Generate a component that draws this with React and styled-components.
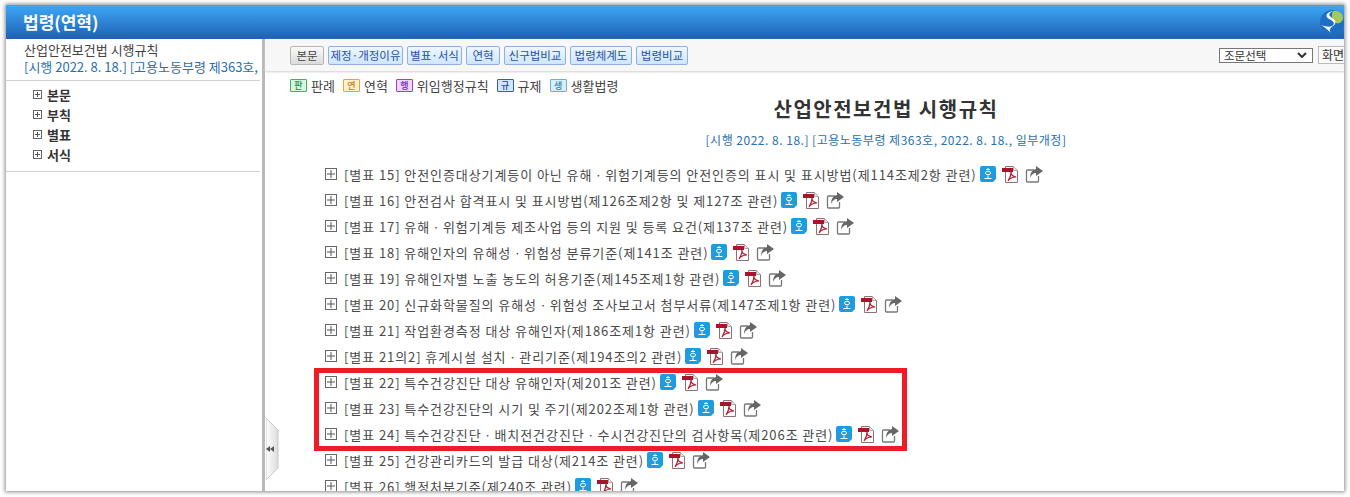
import React from 'react';
import styled, { createGlobalStyle } from 'styled-components';

const GlobalStyle = createGlobalStyle`
  html, body { margin: 0; padding: 0; background: #fff; overflow: hidden; }
  body { font-family: "Noto Sans CJK KR", "Noto Sans", sans-serif; }
`;

const Page = styled.div`
  height: 497px;
  padding: 5px 6px 6px 6px;
  box-sizing: border-box;
`;

const Window = styled.div`
  position: relative;
  height: 486px;
  display: flex;
  flex-direction: column;
  overflow: hidden;
  background: #fff;
  box-shadow: 0 0 4px 1px #8a8a8a;
`;

const Header = styled.div`
  flex: 0 0 34px;
  display: flex;
  align-items: center;
  justify-content: space-between;
  padding-left: 17px;
  background: linear-gradient(#3ea8f8, #1e60b2);
`;

const HeaderTitle = styled.h1`
  margin: 0;
  font-size: 17px;
  font-weight: 700;
  line-height: 20px;
  color: #fff;
`;

const Body = styled.div`
  flex: 1;
  min-height: 0;
  display: flex;
`;

const Sidebar = styled.aside`
  flex: 0 0 259px;
  box-sizing: border-box;
  border-right: 3px solid #b9b9b9;
  padding-right: 2px;
`;

const SideHead = styled.div`
  height: 42px;
  padding: 2px 0 0 18px;
  box-sizing: border-box;
  border-bottom: 1px solid #d2d2d2;
  font-size: 13px;
  line-height: 17px;
  white-space: nowrap;
  overflow: hidden;
  color: #444;
`;

const SideDate = styled.div`
  color: #2a6fb0;
`;

const SideTree = styled.ul`
  margin: 0;
  padding: 3px 0 7px 27px;
  list-style: none;
  border-bottom: 1px solid #d2d2d2;
`;

const SideItem = styled.li`
  height: 20px;
  display: flex;
  align-items: center;
  gap: 5px;
  font-size: 13px;
  font-weight: 700;
  color: #333;
`;

const Main = styled.main`
  position: relative;
  flex: 1;
  min-width: 0;
`;

const Toolbar = styled.div`
  height: 32px;
  display: flex;
  align-items: center;
  padding-left: 25px;
  gap: 4px;
  background: #f7f7f7;
  box-shadow: 0 1px 2px #cfcfcf;
  white-space: nowrap;
`;

const ToolButton = styled.button`
  width: ${p => p.$w}px;
  height: 19px;
  margin: 0;
  padding: 0;
  box-sizing: border-box;
  font: 11.5px/17px "Noto Sans CJK KR", sans-serif;
  border-radius: 2px;
  color: ${p => (p.$active ? '#444' : '#1f4fa8')};
  border: 1px solid ${p => (p.$active ? '#b5b5b5' : '#8eb0e6')};
  background: ${p => (p.$active ? 'linear-gradient(#fafafa, #dcdcdc)' : 'linear-gradient(#eef7ff, #cfe6fb)')};
`;

const ToolRight = styled.div`
  margin-left: auto;
  margin-right: -22px;
  display: flex;
  align-items: center;
  gap: 5px;
  flex-shrink: 0;
`;

const SelectBox = styled.select`
  appearance: none;
  width: 94px;
  height: 15px;
  box-sizing: border-box;
  padding: 0 0 0 4px;
  font: 11.5px/13px "Noto Sans CJK KR", sans-serif;
  color: #333;
  border: 1px solid #777;
  border-radius: 0;
  background: #fff url("data:image/svg+xml,%3Csvg xmlns='http://www.w3.org/2000/svg' width='10' height='6'%3E%3Cpath d='M1 1l4 4 4-4' fill='none' stroke='%23333' stroke-width='2'/%3E%3C/svg%3E") no-repeat right 5px center;
`;

const ScreenButton = styled.button`
  height: 18px;
  width: 48px;
  padding: 0 3px;
  text-align: left;
  font: 12px/16px "Noto Sans CJK KR", sans-serif;
  color: #333;
  background: #fafafa;
  border: 1px solid #bbb;
`;

const Legend = styled.div`
  display: flex;
  align-items: center;
  gap: 8px;
  margin-top: 8px;
  padding-left: 25px;
  height: 13px;
  font-size: 13px;
  color: #444;
`;

const LegendItem = styled.span`
  display: flex;
  align-items: center;
  gap: 4px;
`;

const Tag = styled.span`
  width: 15px;
  height: 11px;
  font-size: 9px;
  font-weight: 500;
  line-height: 11px;
  text-align: center;
  border: 1px solid ${p => p.$line};
  border-radius: 1px;
  color: ${p => p.$text};
  background: ${p => p.$bg};
`;

const Article = styled.div`
  width: 1242px;
`;

const Title = styled.h2`
  margin: 4px 0 0;
  text-align: center;
  font-size: 20px;
  line-height: 26px;
  font-weight: 700;
  letter-spacing: 1.5px;
  color: #333;
`;

const Subtitle = styled.div`
  margin-top: 10px;
  text-align: center;
  font-size: 12px;
  line-height: 16px;
  letter-spacing: 0.5px;
  color: #2a6fb0;
`;

const List = styled.ul`
  margin: 13px 0 0;
  padding: 0 0 0 60px;
  list-style: none;
`;

const Row = styled.li`
  height: 26px;
  display: flex;
  align-items: center;
  white-space: nowrap;
  font-size: 13px;
  letter-spacing: 0.92px;
  color: #4a4a4a;
`;

const RowText = styled.span`
  margin-left: 7px;
`;

const RowIcons = styled.span`
  display: inline-flex;
  align-items: center;
  margin-left: 3px;
  gap: 6px;
`;

const Highlight = styled.div`
  position: absolute;
  left: 308px;
  top: 363px;
  width: 593px;
  height: 83px;
  box-sizing: border-box;
  border: 5px solid #ee1c25;
  pointer-events: none;
`;

const Collapse = styled.svg`
  position: absolute;
  left: 1px;
  top: 379px;
`;

const PlusBox = ({ size = 12 }) => (
  <svg width={size} height={size} viewBox={`0 0 ${size} ${size}`} style={{ flexShrink: 0 }}>
    <rect x="0.5" y="0.5" width={size - 1} height={size - 1} fill="#fff" stroke="#666" />
    <path d={`M2 ${size / 2}h${size - 4}M${size / 2} 2v${size - 4}`} stroke="#555" />
  </svg>
);

const Logo = () => (
  <svg width="24" height="24" viewBox="0 0 24 24">
    <circle cx="12" cy="12" r="12" fill="#1d6fc4" />
    <path d="M13 1c5-1 10 2 10 7 0 4-4 6-7 5-4-2-5-8-3-12z" fill="#a3c95a" />
    <path d="M13 1C7 2 4 6 9 9c4 2 7 4 3 7-2 1-6 1-11-1 4 2 7 5 10 8-2-3-1-5 2-7 4-3 3-6-2-9-3-2-2-4 2-6z" fill="#fff" />
  </svg>
);

const ViewIcon = () => (
  <svg width="16" height="16" viewBox="0 0 16 16">
    <path d="M2 0h12a2 2 0 0 1 2 2v11l-3 3H2a2 2 0 0 1-2-2V2a2 2 0 0 1 2-2z" fill="#1f9ce0" />
    <path d="M6 3.500h4M8 2v1.500M4.500 12.500h7M8 9.500v3" stroke="#fff" fill="none" />
    <ellipse cx="8" cy="7" rx="2.500" ry="1.800" stroke="#fff" fill="none" />
  </svg>
);

const PdfIcon = () => (
  <svg width="17" height="17" viewBox="0 0 17 17">
    <path d="M3.500 0.500h8l4 4v12h-12z" fill="#fff" stroke="#8d6f74" />
    <path d="M11.500 0.500v4h4" fill="#e8e8e8" stroke="#aaa" />
    <rect x="0" y="2" width="11" height="4" fill="#a8152a" />
    <path d="M6 15c2-3 3-6 3-9 0 3 1 4 5 5-4 0-6 1-8 4z" fill="none" stroke="#b4202f" strokeWidth="1.200" />
  </svg>
);

const ShareIcon = () => (
  <svg width="18" height="17" viewBox="0 0 18 17">
    <path d="M9 4H2.500a1 1 0 0 0-1 1v10a1 1 0 0 0 1 1h10a1 1 0 0 0 1-1v-5" fill="none" stroke="#777" strokeWidth="1.300" />
    <path d="M11 0l7 5-7 5V7c-3 0-5 2-6 5 0-5 2-8 6-9z" fill="#666" />
  </svg>
);

const buttons = [
  { label: '제정·개정이유', w: 75 },
  { label: '별표·서식', w: 55 },
  { label: '연혁', w: 34 },
  { label: '신구법비교', w: 62 },
  { label: '법령체계도', w: 62 },
  { label: '법령비교', w: 52 },
];

const legend = [
  { tag: '판', label: '판례', line: '#3cb56a', text: '#1c8f46', bg: '#d8f6e0' },
  { tag: '연', label: '연혁', line: '#eda32c', text: '#c77a10', bg: '#fdf0cf' },
  { tag: '행', label: '위임행정규칙', line: '#9a3fd8', text: '#7d22b8', bg: '#ecd8fb' },
  { tag: '규', label: '규제', line: '#2a5fc9', text: '#1a47a8', bg: '#d3e5fb' },
  { tag: '생', label: '생활법령', line: '#5fb2d8', text: '#2f86ae', bg: '#d8eef8' },
];

const rows = [
  '[별표 15] 안전인증대상기계등이 아닌 유해ㆍ위험기계등의 안전인증의 표시 및 표시방법(제114조제2항 관련)',
  '[별표 16] 안전검사 합격표시 및 표시방법(제126조제2항 및 제127조 관련)',
  '[별표 17] 유해ㆍ위험기계등 제조사업 등의 지원 및 등록 요건(제137조 관련)',
  '[별표 18] 유해인자의 유해성ㆍ위험성 분류기준(제141조 관련)',
  '[별표 19] 유해인자별 노출 농도의 허용기준(제145조제1항 관련)',
  '[별표 20] 신규화학물질의 유해성ㆍ위험성 조사보고서 첨부서류(제147조제1항 관련)',
  '[별표 21] 작업환경측정 대상 유해인자(제186조제1항 관련)',
  '[별표 21의2] 휴게시설 설치ㆍ관리기준(제194조의2 관련)',
  '[별표 22] 특수건강진단 대상 유해인자(제201조 관련)',
  '[별표 23] 특수건강진단의 시기 및 주기(제202조제1항 관련)',
  '[별표 24] 특수건강진단ㆍ배치전건강진단ㆍ수시건강진단의 검사항목(제206조 관련)',
  '[별표 25] 건강관리카드의 발급 대상(제214조 관련)',
  '[별표 26] 행정처분기준(제240조 관련)',
];

export default function App() {
  return (
    <Page>
      <GlobalStyle />
      <Window>
        <Header>
          <HeaderTitle>법령(연혁)</HeaderTitle>
          <Logo />
        </Header>
        <Body>
          <Sidebar>
            <SideHead>
              <div>산업안전보건법 시행규칙</div>
              <SideDate>[시행 2022. 8. 18.] [고용노동부령 제363호,</SideDate>
            </SideHead>
            <SideTree>
              {['본문', '부칙', '별표', '서식'].map(name => (
                <SideItem key={name}>
                  <PlusBox size={9} />
                  {name}
                </SideItem>
              ))}
            </SideTree>
          </Sidebar>
          <Main>
            <Toolbar>
              <ToolButton $active $w={34}>본문</ToolButton>
              {buttons.map(b => <ToolButton key={b.label} $w={b.w}>{b.label}</ToolButton>)}
              <ToolRight>
                <SelectBox defaultValue="조문선택">
                  <option>조문선택</option>
                </SelectBox>
                <ScreenButton>화면내검색</ScreenButton>
              </ToolRight>
            </Toolbar>
            <Legend>
              {legend.map(l => (
                <LegendItem key={l.tag}>
                  <Tag $line={l.line} $text={l.text} $bg={l.bg}>{l.tag}</Tag>
                  {l.label}
                </LegendItem>
              ))}
            </Legend>
            <Article>
              <Title>산업안전보건법 시행규칙</Title>
              <Subtitle>[시행 2022. 8. 18.] [고용노동부령 제363호, 2022. 8. 18., 일부개정]</Subtitle>
              <List>
                {rows.map(r => (
                  <Row key={r}>
                    <PlusBox />
                    <RowText>{r}</RowText>
                    <RowIcons>
                      <ViewIcon />
                      <PdfIcon />
                      <ShareIcon />
                    </RowIcons>
                  </Row>
                ))}
              </List>
            </Article>
            <Collapse width="13" height="62" viewBox="0 0 13 62">
              <defs>
                <linearGradient id="handleFill">
                  <stop offset="0" stopColor="#fff" />
                  <stop offset="1" stopColor="#dcdcdc" />
                </linearGradient>
              </defs>
              <path d="M0 0L12 12V50L0 62z" fill="url(#handleFill)" stroke="#c8c8c8" />
              <path d="M4 28l-4 3 4 3zM8 28l-4 3 4 3z" fill="#555" />
            </Collapse>
          </Main>
        </Body>
        <Highlight />
      </Window>
    </Page>
  );
}
